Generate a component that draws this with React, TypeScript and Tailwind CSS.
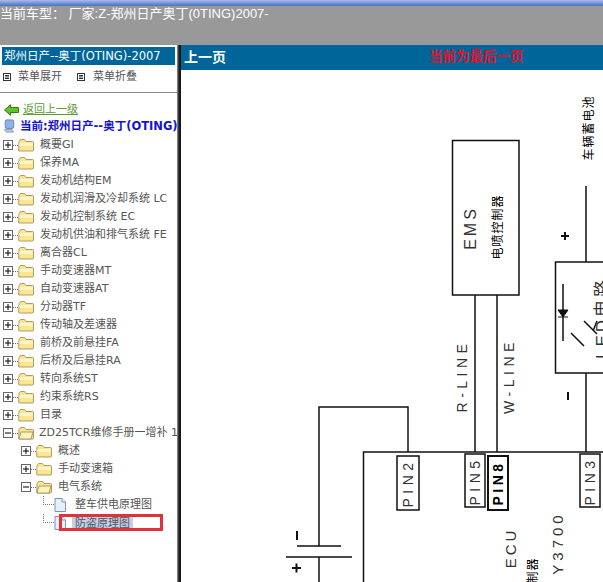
import React from 'react';

const font = "font-['Liberation_Sans','Noto_Sans_CJK_SC',sans-serif]";
const treeFont = "font-['DejaVu_Sans','Noto_Sans_CJK_SC',sans-serif]";

const topNodes = [
    '概要GI', '保养MA', '发动机结构EM', '发动机润滑及冷却系统 LC', '发动机控制系统 EC', '发动机供油和排气系统 FE',
    '离合器CL', '手动变速器MT', '自动变速器AT', '分动器TF', '传动轴及差速器', '前桥及前悬挂FA',
    '后桥及后悬挂RA', '转向系统ST', '约束系统RS', '目录',
];

function Toggle({ open }: { open?: boolean }) {
    return (
        <svg width="10" height="10" viewBox="0 0 10 10" className="shrink-0">
            <rect x="0.5" y="0.5" width="9" height="9" fill="#fff" stroke="#666" />
            <path d={open ? 'M2 5h6' : 'M2 5h6M5 2v6'} stroke="#000" />
        </svg>
    );
}

function Folder({ open }: { open?: boolean }) {
    return (
        <svg width="16" height="14" viewBox="0 0 16 14" className="shrink-0">
            <path d="M1 3.5 2.5 1.5h4L8 3.5h6.5a1 1 0 0 1 1 1V12a1 1 0 0 1-1 1h-13a.8.8 0 0 1-.8-1z" fill="#fbe58f" stroke="#9a8750" strokeWidth="0.8" />
            {open ? (
                <path d="M3 6h12l-2 7H1z" fill="#fff3bd" stroke="#9a8750" strokeWidth="0.8" />
            ) : (
                <path d="M1.5 5h13v3h-13z" fill="#fff6c9" />
            )}
        </svg>
    );
}

function Doc() {
    return (
        <svg width="12" height="14" viewBox="0 0 12 14" className="shrink-0">
            <path d="M1 .5h7l3.5 3.500v9.500H1z" fill="#e6effa" stroke="#7f93b2" />
            <path d="M8 .5V4h3.500" fill="#fff" stroke="#7f93b2" />
        </svg>
    );
}

function MenuIcon() {
    return (
        <svg width="8" height="8" viewBox="0 0 8 8" className="shrink-0">
            <rect x="0.5" y="0.5" width="7" height="7" fill="#fff" stroke="#333" />
            <path d="M2 2.500h4M2 4h4M2 5.500h4" stroke="#333" />
        </svg>
    );
}

function Dots({ className }: { className: string }) {
    return <div className={`shrink-0 border-dotted border-[#777] ${className}`} />;
}

function Row({ children }: { children: React.ReactNode }) {
    return <div className="h-[18px] flex items-center whitespace-nowrap text-[11px] text-[#555]">{children}</div>;
}

function Diagram() {
    const vText = (x: number, y: number, s: string, size: number, spacing: number, extra?: string, color = '#333') => (
        <text
            transform={`translate(${x} ${y}) rotate(-90)`}
            fontSize={size}
            letterSpacing={spacing}
            textAnchor="middle"
            dominantBaseline="central"
            fill={color}
            fontWeight={extra}
            className={font}
        >
            {s}
        </text>
    );
    return (
        <svg viewBox="181 70 422 512" width="422" height="512" className="block">
            <g fill="none" stroke="#111" strokeWidth="1.500">
                <path d="M452.500 295V140.500H519V295z" />
                <path d="M475 295V452M497 295V452" />
                <path d="M603 452H363.500V582" />
                <path d="M408 452V407H319V546M297 546h44M286 557h66M319 557v25" />
                <path d="M586 186v76M603 262H555.500V373H603M586 373v79" />
                <path d="M563 284v57M571 333l13 13M584 321l13 13M597 321l-4 10" />
                <path d="M558 310h10l-5 7zM558 317h10" fill="#111" strokeWidth="1" />
            </g>
            <g fill="#fff" stroke="#111" strokeWidth="1.500">
                <rect x="397" y="456" width="22" height="54" />
                <rect x="465" y="454" width="20" height="53" />
                <rect x="488" y="456" width="20" height="54" strokeWidth="2" />
                <rect x="580" y="454" width="20" height="53" />
            </g>
            {vText(589, 128, '车辆蓄电池', 12, 1, '400', '#000')}
            {vText(470, 228, 'EMS', 16, 3)}
            {vText(498, 227, '电喷控制器', 12, 1, '400', '#000')}
            {vText(462, 376, 'R-LINE', 14, 4.500)}
            {vText(509, 376, 'W-LINE', 14, 4.500)}
            {vText(408, 483, 'PIN2', 14, 4.500)}
            {vText(475, 481, 'PIN5', 14, 4.500)}
            {vText(498, 483, 'PIN8', 14, 3.500, '700', '#000')}
            {vText(590, 481, 'PIN3', 14, 4.500)}
            {vText(602, 318, 'LED电路', 17, 3)}
            {vText(510, 548, 'ECU', 15, 3)}
            {vText(533, 590, '防盗控制器', 12, 1, '400', '#000')}
            {vText(557, 543, 'Y3700', 15, 4)}
            <g stroke="#111" strokeWidth="2" fill="none">
                <path d="M561 236h8M565 232v8" />
                <path d="M568 392v8" />
                <path d="M297 531v9" />
                <path d="M292 568h9M296.500 563.500v9" />
            </g>
        </svg>
    );
}

export default function App() {
    return (
        <main className={`relative w-[603px] h-[582px] overflow-hidden bg-white flex flex-col ${font}`}>
            <div className="h-[6px] shrink-0 bg-gradient-to-b from-[#a9bde8] to-[#4a6fc0]" />
            <div className="h-[39px] shrink-0 bg-[#999999] text-white text-[13px] leading-[15px] whitespace-nowrap">
                当前车型： 厂家:Z-郑州日产奥丁(0TING)2007-
            </div>

            <div className="flex-1 flex min-h-0">
                {/* left tree */}
                <div className={`w-[177px] shrink-0 overflow-hidden pt-[2px] ${treeFont}`}>
                    <div className="mx-[2px] h-[18px] bg-[#006699] pl-[2px] text-white text-[11.500px] leading-[18px] whitespace-nowrap overflow-hidden">
                        郑州日产--奥丁(OTING)-2007
                    </div>
                    <div className="h-[28px] flex items-center border-b border-[#888] pb-[3px] text-[11px] text-[#555] whitespace-nowrap">
                        <div className="ml-[3px] flex items-center gap-[7px]">
                            <MenuIcon />
                            <span>菜单展开</span>
                        </div>
                        <div className="ml-[15px] flex items-center gap-[8px]">
                            <MenuIcon />
                            <span>菜单折叠</span>
                        </div>
                    </div>

                    <div className="h-[26px] pt-[8px] flex items-center pl-[4px] gap-[4px] text-[11px] text-[#5a9a30] underline whitespace-nowrap">
                        <svg width="15" height="12" viewBox="0 0 15 12" className="shrink-0">
                            <path d="M.5 6 6.500.8V3.500h8v5h-8v2.700z" fill="#5fc32a" stroke="#2f7a10" />
                        </svg>
                        返回上一级
                    </div>
                    <div className="h-[15px] flex items-center pl-[3px] gap-[5px] whitespace-nowrap overflow-hidden text-[11.500px] font-bold text-[#1414d2]">
                        <svg width="12" height="15" viewBox="0 0 12 16" className="shrink-0">
                            <rect x="2" y="1" width="9" height="9" rx="1.500" fill="#8fb4ea" stroke="#5f7fb8" />
                            <path d="M1 11h8l2 3H3z" fill="#b8c4dc" stroke="#6a7fa8" strokeWidth="0.6" />
                        </svg>
                        当前:郑州日产--奥丁(OTING)
                    </div>

                    <div className="pl-[3px] pt-[2px]">
                        {topNodes.map((n) => (
                            <Row key={n}>
                                <Toggle />
                                <Dots className="w-[5px] border-t" />
                                <Folder />
                                <span className="ml-[6px]">{n}</span>
                            </Row>
                        ))}
                        <Row>
                            <Toggle open />
                            <Dots className="w-[5px] border-t" />
                            <Folder open />
                            <span className="ml-[5px]">ZD25TCR维修手册一增补 1</span>
                        </Row>
                        <div className="pl-[18px]">
                            <Row>
                                <Toggle />
                                <Dots className="w-[5px] border-t" />
                                <Folder />
                                <span className="ml-[6px]">概述</span>
                            </Row>
                            <Row>
                                <Toggle />
                                <Dots className="w-[5px] border-t" />
                                <Folder />
                                <span className="ml-[6px]">手动变速箱</span>
                            </Row>
                            <Row>
                                <Toggle open />
                                <Dots className="w-[5px] border-t" />
                                <Folder open />
                                <span className="ml-[6px]">电气系统</span>
                            </Row>
                            <Row>
                                <Dots className="ml-[22px] w-[11px] h-[9px] -mt-[9px] border-l border-b" />
                                <Doc />
                                <span className="ml-[9px]">整车供电原理图</span>
                            </Row>
                            <Row>
                                <Dots className="ml-[22px] w-[11px] h-[9px] -mt-[9px] border-l border-b" />
                                <Doc />
                                <span className="ml-[6px] px-[3px] bg-[#c3cfe8] leading-[15px]">防盗原理图</span>
                            </Row>
                        </div>
                    </div>
                </div>

                <div className="w-[4px] shrink-0 bg-gradient-to-r from-[#999] via-[#222] to-[#111]" />

                {/* right page */}
                <div className="flex-1 min-w-0 flex flex-col">
                    <div className="relative h-[25px] shrink-0 bg-[#006699] flex items-center pl-[3px]">
                        <span className="text-white text-[14px] font-bold">上一页</span>
                        <span className="absolute left-[248px] text-[#e8102a] text-[13.500px] font-bold">当前为最后一页</span>
                    </div>
                    <Diagram />
                </div>
            </div>

            <div className="absolute left-[59px] top-[514px] w-[104px] h-[17px] border-[3px] border-[#e0323c]" />
        </main>
    );
}
